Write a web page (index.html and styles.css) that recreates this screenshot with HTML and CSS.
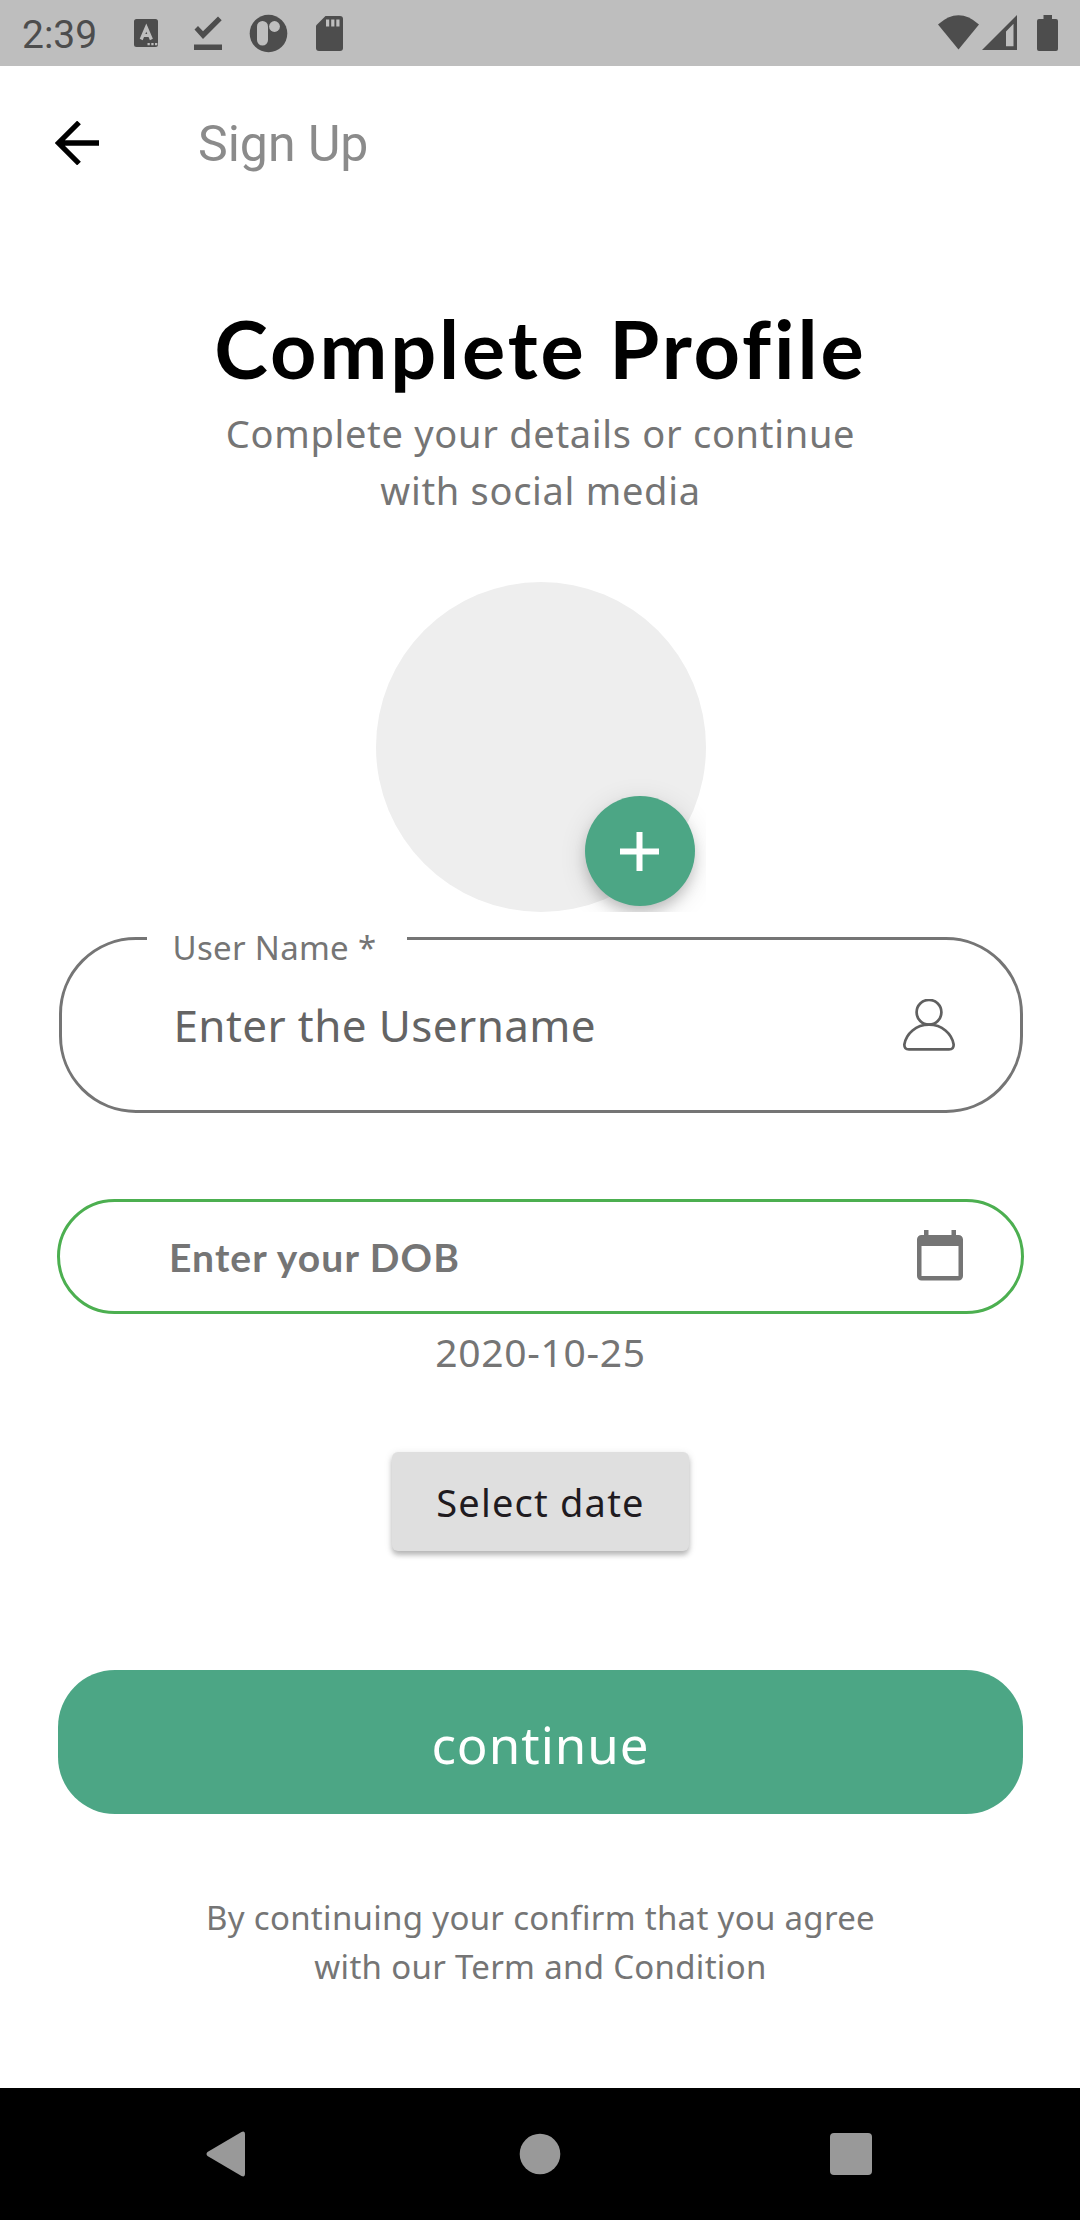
FILE: index.html
```html
<!DOCTYPE html>
<html lang="en">
<head>
<meta charset="utf-8">
<title>Sign Up</title>
<link rel="stylesheet" href="styles.css">
</head>
<body>
<div class="screen">
  <header class="status-bar">
    <span class="clock">2:39</span>
    <svg class="status-left" width="220" height="66" viewBox="0 0 220 66">
      <path d="M6.500 19h19a2.500 2.500 0 0 1 2.500 2.500v23a2.500 2.500 0 0 1-2.500 2.500h-19a2.500 2.500 0 0 1-2.500-2.500v-23a2.500 2.500 0 0 1 2.500-2.500z"/>
      <path class="cut-line" d="M11.200 39.500L16.300 27.500L21.400 39.500M13 35.500h6.600"/>
      <path class="cut" d="M17.500 43h2.300v2.300h-2.300zM21.300 43h2.300v2.300h-2.300zM25 43h2.300v2.300h-2.300z"/>
      <path d="M64 44.500h28v5.500h-28zM64.500 29.500l3.500-3.500 5 5.200 15-14.700 3.700 3.700-18.700 18.700z"/>
      <circle cx="138.500" cy="33.500" r="18.800"/>
      <rect class="cut" x="127" y="21" width="11" height="24.500" rx="5.500"/>
      <circle class="cut" cx="144.500" cy="26.500" r="5.400"/>
      <path d="M195.500 16h14.500a3 3 0 0 1 3 3v29a3 3 0 0 1-3 3h-21a3 3 0 0 1-3-3v-22.500z"/>
      <path class="cut" d="M196 19.500h3.200v7h-3.200zM201.200 19.500h3.200v7h-3.200zM206.300 19.500h3.200v7h-3.200z"/>
    </svg>
    <svg class="status-right" width="130" height="66" viewBox="0 0 130 66">
      <path d="M8 24.500q20.500-18.500 41 0l-20.500 25z"/>
      <path fill-rule="evenodd" d="M87 15v35h-35zM76 31.500v14.800h7.500v-22.500z"/>
      <path d="M113.500 15h8.500v4h4a2 2 0 0 1 2 2v28a2 2 0 0 1-2 2h-17a2 2 0 0 1-2-2v-28a2 2 0 0 1 2-2h4.500z"/>
    </svg>
  </header>

  <div class="app-bar">
    <svg class="back" width="44" height="44" viewBox="0 0 44 44"><path d="M44 22H4M24 1.500L3.500 22L24 42.500"/></svg>
    <span class="app-title">Sign Up</span>
  </div>

  <main class="content">
    <h1 class="heading">Complete Profile</h1>
    <p class="subtitle">Complete your details or continue<br>with social media</p>

    <div class="avatar">
      <div class="avatar-disc"></div>
      <button class="add-photo" aria-label="Add photo">
        <svg width="39" height="39" viewBox="0 0 39 39"><path d="M19.500 0v39M0 19.500h39"/></svg>
      </button>
    </div>

    <div class="field">
      <label class="field-label">User Name *</label>
      <span class="field-hint">Enter the Username</span>
      <svg class="person" width="52" height="52" viewBox="0 0 52 52"><circle cx="26" cy="13.300" r="12.400"/><path d="M26 25.700C13 25.700 3.300 34.500 1.400 45.200Q1 50.300 6 50.400H46Q51 50.300 50.600 45.200C48.700 34.500 39 25.700 26 25.700z"/></svg>
    </div>

    <div class="dob">
      <span class="dob-text">Enter your DOB</span>
      <svg class="calendar" width="46" height="51" viewBox="0 0 46 51"><path fill-rule="evenodd" d="M7 0h4.500v5h23v-5h4.500v5h2.500a4.500 4.500 0 0 1 4.500 4.500v36.500a4.500 4.500 0 0 1-4.500 4.500h-37a4.500 4.500 0 0 1-4.500-4.500v-36.500a4.500 4.500 0 0 1 4.500-4.500h2.500zM4.500 16v30h37v-30z"/></svg>
    </div>

    <p class="date">2020-10-25</p>
    <button class="select-date">Select date</button>
    <button class="continue">continue</button>
    <p class="terms">By continuing your confirm that you agree<br>with our Term and Condition</p>
  </main>

  <nav class="nav-bar">
    <svg width="40" height="46" viewBox="0 0 40 46"><path d="M35.500 1Q39 -.5 39 3.500V42.500Q39 46.500 35.500 45L1.500 25Q-.5 23 1.500 21z"/></svg>
    <svg class="home" width="42" height="42" viewBox="0 0 42 42"><circle cx="21" cy="21" r="20.300"/></svg>
    <svg width="42" height="42" viewBox="0 0 42 42"><rect width="42" height="42" rx="4"/></svg>
  </nav>
</div>
</body>
</html>
```
FILE: styles.css
```css
* {
  box-sizing: border-box;
}

body {
  margin: 0;
  background: #fff;
}

h1, p {
  margin: 0;
}

button {
  border: 0;
  padding: 0;
  font: inherit;
}

svg {
  display: block;
  flex: none;
}

.screen {
  display: flex;
  flex-direction: column;
  width: 1080px;
  height: 2220px;
  background: #fff;
  color: #757575;
  font-family: "Noto Sans", sans-serif;
  font-variant-ligatures: none;
}

.status-bar {
  display: flex;
  align-items: center;
  height: 66px;
  padding: 0 20px 0 22px;
  background: #bebebe;
  color: #4d4d4d;
  fill: #4d4d4d;
}

.clock {
  width: 108px;
  padding-top: 3px;
  font: 39px/60px Roboto, sans-serif;
}

.status-right {
  margin-left: auto;
}

.cut {
  fill: #bebebe;
}

.cut-line {
  fill: none;
  stroke: #bebebe;
  stroke-width: 3.2;
}

.app-bar {
  display: flex;
  align-items: center;
  gap: 99px;
  height: 154px;
  padding-left: 55px;
}

.back {
  fill: none;
  stroke: #000;
  stroke-width: 5.3;
}

.app-title {
  padding-top: 2px;
  color: #8b8b8b;
  font: 50px/60px Roboto, sans-serif;
}

.content {
  display: flex;
  flex: 1;
  flex-direction: column;
  align-items: center;
  padding: 79px 56px 0 57px;
}

.heading {
  color: #000;
  font-family: Lato, sans-serif;
  font-size: 81px;
  font-weight: 700;
  line-height: 98px;
  letter-spacing: 2.9px;
}

.subtitle {
  margin-top: 8px;
  font-size: 38px;
  line-height: 57px;
  letter-spacing: .7px;
  text-align: center;
}

.avatar {
  position: relative;
  width: 330px;
  height: 330px;
  margin-top: 63px;
  overflow: hidden;
}

.avatar-disc {
  height: 100%;
  border-radius: 50%;
  background: #eee;
}

.add-photo {
  position: absolute;
  right: 11px;
  bottom: 6px;
  display: grid;
  place-items: center;
  width: 110px;
  height: 110px;
  border-radius: 50%;
  background: #4ca685;
  box-shadow: 0 8px 14px -2px rgba(0, 0, 0, .2), 0 6px 28px rgba(0, 0, 0, .12);
  stroke: #fff;
  stroke-width: 6;
}

.field {
  position: relative;
  display: flex;
  align-items: center;
  justify-content: space-between;
  width: 964px;
  height: 176px;
  margin-top: 25px;
  padding: 0 65px 0 112px;
  border: 3px solid #757575;
  border-radius: 77px;
}

.field-label {
  position: absolute;
  top: -9px;
  left: 85px;
  width: 260px;
  padding-left: 26px;
  background: #fff;
  font-size: 33px;
  line-height: 34px;
  letter-spacing: .3px;
}

.field-hint {
  color: #646464;
  font-size: 44px;
  line-height: 56px;
  letter-spacing: .4px;
}

.person {
  fill: none;
  stroke: #606060;
  stroke-width: 2.700;
}

.dob {
  display: flex;
  align-items: center;
  justify-content: space-between;
  width: 100%;
  height: 115px;
  margin-top: 86px;
  padding: 0 58px 0 109px;
  border: 3px solid #4caf50;
  border-radius: 58px;
}

.dob-text {
  font-family: Lato, sans-serif;
  font-size: 39px;
  font-weight: 700;
  line-height: 50px;
  letter-spacing: 1.1px;
}

.calendar {
  margin-bottom: 2px;
  fill: #757575;
}

.date {
  margin-top: 14px;
  font-size: 39px;
  line-height: 48px;
  letter-spacing: .7px;
}

.select-date {
  width: 297px;
  height: 99px;
  margin-top: 76px;
  border-radius: 6px;
  background: #dfdfdf;
  box-shadow: 0 4px 5px rgba(0, 0, 0, .22), 0 2px 8px rgba(0, 0, 0, .12);
  color: #1f1b1f;
  font-size: 38px;
  letter-spacing: 1.2px;
}

.continue {
  width: 965px;
  height: 144px;
  margin-top: 119px;
  padding-top: 4px;
  border-radius: 57px;
  background: #4ca685;
  color: #fff;
  font-size: 51px;
  letter-spacing: 1px;
}

.terms {
  margin-top: 79px;
  font-size: 33px;
  line-height: 49px;
  letter-spacing: .3px;
  text-align: center;
}

.nav-bar {
  display: flex;
  align-items: center;
  justify-content: space-between;
  height: 132px;
  padding: 0 208px 0 206px;
  background: #000;
  fill: #999;
}

.home {
  margin-left: 4px;
}
```
